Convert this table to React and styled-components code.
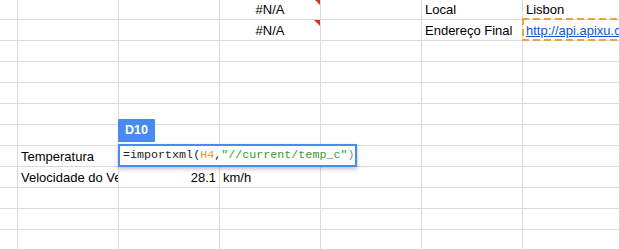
import React from "react";
import styled, { createGlobalStyle } from "styled-components";

const GlobalStyle = createGlobalStyle`
  html, body {
    margin: 0;
    padding: 0;
    background: #fff;
    overflow: hidden;
  }
  body {
    font-family: "Liberation Sans", Arial, sans-serif;
  }
`;

const COLS = [18, 101, 101, 101, 101, 101, 101];

const Sheet = styled.div`
  display: grid;
  grid-template-columns: ${COLS.map((w) => w + "px").join(" ")};
  grid-auto-rows: 21px;
  margin-top: -1px;
  width: 624px;
  height: 260px;
  overflow: hidden;
`;

const Cell = styled.div`
  position: relative;
  box-sizing: border-box;
  border-right: 1px solid #dadada;
  border-bottom: 1px solid #dadada;
  padding: 0 3px;
  font-size: 13px;
  line-height: 21px;
  color: #000;
  white-space: nowrap;
  overflow: ${(p) => (p.$overflow ? "visible" : "hidden")};
  text-align: ${(p) => p.$align || "left"};
`;

const ErrorMark = styled.span`
  position: absolute;
  top: 0;
  right: 0;
  width: 0;
  height: 0;
  border-top: 6px solid #c9392a;
  border-left: 6px solid transparent;
`;

const Link = styled.span`
  color: #1155cc;
  text-decoration: underline;
`;

const dash = (dir) =>
  `repeating-linear-gradient(${dir}, #f5a03a 0 7px, transparent 7px 11px)`;

const Marquee = styled.div`
  position: absolute;
  left: -1px;
  top: -2px;
  width: 110px;
  height: 23px;
  box-sizing: border-box;
  pointer-events: none;
  background: ${dash("90deg")} left top / 100% 2px no-repeat,
    ${dash("90deg")} left bottom / 100% 2px no-repeat,
    ${dash("180deg")} left top / 2px 100% no-repeat;
`;

const RefLabel = styled.div`
  position: absolute;
  left: -1px;
  top: -27px;
  width: 37px;
  height: 23px;
  background: #4a89ef;
  border-radius: 1px;
  color: #fff;
  font-weight: bold;
  font-size: 12.5px;
  line-height: 23px;
  text-align: center;
  z-index: 3;
`;

const Editor = styled.div`
  position: absolute;
  left: -1px;
  top: -2px;
  width: 239px;
  height: 23px;
  box-sizing: border-box;
  border: 2px solid #4a89ef;
  background: #fff;
  box-shadow: 0 2px 4px rgba(0, 0, 0, 0.25);
  padding: 0 3px;
  font-family: "Liberation Mono", "DejaVu Sans Mono", monospace;
  font-size: 11.7px;
  line-height: 19px;
  color: #222;
  z-index: 3;
`;

const Token = styled.span`
  color: ${(p) =>
    p.$kind === "ref" ? "#f2952c" : p.$kind === "str" ? "#3a9a2e" : p.$kind === "paren" ? "#888" : "#222"};
`;

function FormulaEditor() {
  return (
    <>
      <RefLabel>D10</RefLabel>
      <Editor>
        =importxml(<Token $kind="ref">H4</Token>,<Token $kind="str">"//current/temp_c"</Token>
        <Token $kind="paren">)</Token>
      </Editor>
    </>
  );
}

// row -> col -> content
const cells = {
  0: {
    3: { text: "#N/A", align: "center", error: true },
    5: { text: "Local" },
    6: { text: "Lisbon" },
  },
  1: {
    3: { text: "#N/A", align: "center", error: true },
    5: { text: "Endereço Final" },
    6: { link: "http://api.apixu.com/v1/current.xml", marquee: true },
  },
  7: {
    1: { text: "Temperatura" },
    2: { editor: true },
  },
  8: {
    1: { text: "Velocidade do Vento" },
    2: { text: "28.1", align: "right" },
    3: { text: "km/h" },
  },
};

export default function App() {
  const rows = Array.from({ length: 13 }, (_, r) => r);
  return (
    <>
      <GlobalStyle />
      <Sheet>
        {rows.map((r) =>
          COLS.map((_, c) => {
            const cell = (cells[r] && cells[r][c]) || {};
            return (
              <Cell key={`${r}-${c}`} $align={cell.align} $overflow={cell.editor || cell.marquee}>
                {cell.text}
                {cell.link && <Link>{cell.link}</Link>}
                {cell.error && <ErrorMark />}
                {cell.marquee && <Marquee />}
                {cell.editor && <FormulaEditor />}
              </Cell>
            );
          })
        )}
      </Sheet>
    </>
  );
}
